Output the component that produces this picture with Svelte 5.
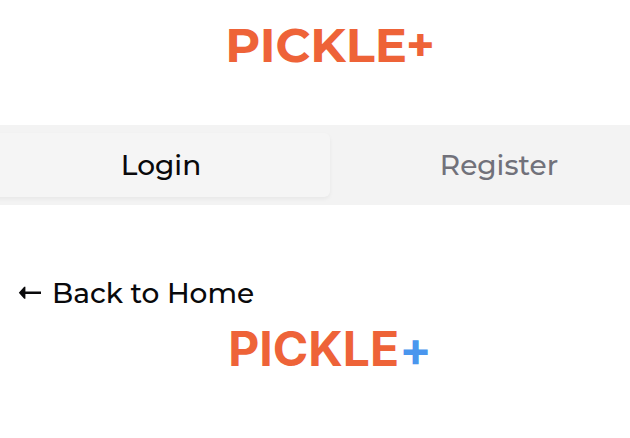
<script>
  let active = $state('login');
</script>

<main>
  <header class="brand">PICKLE+</header>

  <div class="tabs" role="tablist">
    <button type="button" role="tab" aria-selected={active === 'login'} class:active={active === 'login'} onclick={() => (active = 'login')}>Login</button>
    <button type="button" role="tab" aria-selected={active === 'register'} class:active={active === 'register'} onclick={() => (active = 'register')}>Register</button>
  </div>

  <a class="back" href="#home">
    <svg width="24" height="16" viewBox="0 0 24 16" aria-hidden="true">
      <path d="M.8 7.8 6.2 1.8H7.4V6.6H23V9H7.4V13.8H6.2Z" fill="currentColor" />
    </svg>
    <span>Back to Home</span>
  </a>

  <div class="logo">PICKLE<span>+</span></div>
</main>

<style>
  :global(body) {
    margin: 0;
    background: #fff;
  }
  main {
    overflow: hidden;
    font-family: Montserrat, Inter, sans-serif;
    color: #09090b;
  }
  .brand {
    padding: 17px 0 52px 30px;
    text-align: center;
    font-size: 48px;
    font-weight: 700;
    line-height: 56px;
    color: #ee6338;
  }
  .tabs {
    display: grid;
    grid-template-columns: 1fr 1fr;
    height: 80px;
    margin: 0 -46px 0 -16px;
    padding: 8px;
    box-sizing: border-box;
    background: #f3f3f3;
  }
  .tabs button {
    border: 0;
    border-radius: 6px;
    background: transparent;
    padding: 0;
    font: inherit;
    font-size: 28px;
    font-weight: 500;
    color: #71717a;
  }
  .tabs button.active {
    background: #f5f5f5;
    color: #09090b;
    box-shadow: 0 2px 4px rgba(0, 0, 0, 0.05);
  }
  .back {
    display: flex;
    align-items: center;
    gap: 10px;
    margin-top: 70px;
    padding-left: 18px;
    font-size: 28px;
    font-weight: 500;
    line-height: 36px;
    color: inherit;
    text-decoration: none;
  }
  .logo {
    padding: 10px 0 60px 30px;
    text-align: center;
    font-family: Inter, sans-serif;
    font-size: 48px;
    font-weight: 700;
    font-variant-ligatures: no-contextual;
    line-height: 56px;
    color: #ee6338;
  }
  .logo span {
    color: #4a96ee;
  }
</style>
